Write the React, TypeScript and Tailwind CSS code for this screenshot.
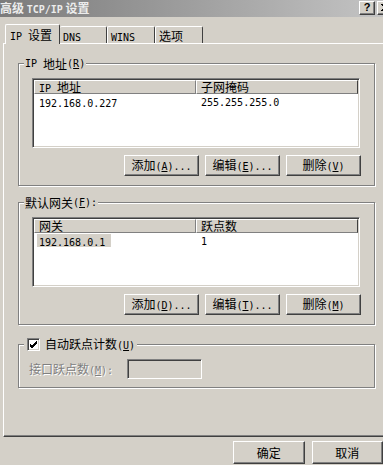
import React from "react";

const MONO = "font-['DejaVu_Sans_Mono',monospace] text-[10px] whitespace-pre";

function renderAscii(p: string) {
  const segs = p.split("&");
  return segs.map((s, i) =>
    i === 0 ? (
      <React.Fragment key={i}>{s}</React.Fragment>
    ) : (
      <React.Fragment key={i}>
        <u className="underline-offset-[1px]">{s[0]}</u>
        {s.slice(1)}
      </React.Fragment>
    )
  );
}

function Txt({ s }: { s: string }) {
  const parts = s.split(/([\x20-\x7E]+)/).filter((x) => x.length > 0);
  return (
    <>
      {parts.map((p, i) =>
        /^[\x20-\x7E]+$/.test(p) ? (
          <span key={i} className={MONO}>
            {renderAscii(p)}
          </span>
        ) : (
          <span key={i}>{p}</span>
        )
      )}
    </>
  );
}

const RAISED =
  "border border-t-white border-l-white border-r-[#404040] border-b-[#404040] shadow-[inset_-1px_-1px_0_#808080] bg-[#d4d0c8]";
const SUNKEN =
  "border border-t-[#808080] border-l-[#808080] border-r-white border-b-white shadow-[inset_1px_1px_0_#404040,inset_-1px_-1px_0_#d4d0c8]";

function Btn({ label, w = "w-[75px]", h = "h-[21px]" }: { label: string; w?: string; h?: string }) {
  return (
    <div className={`flex items-center justify-center ${w} ${h} ${RAISED}`}>
      <span className="leading-[13px]">
        <Txt s={label} />
      </span>
    </div>
  );
}

function List({
  cols,
  rows,
  selFirst,
}: {
  cols: [string, string];
  rows: [string, string][];
  selFirst?: boolean;
}) {
  return (
    <div className={`w-[328px] h-[70px] bg-white p-[1px] ${SUNKEN}`}>
      <div className="flex h-[14px] leading-[12px]">
        <div className="w-[162px] border border-t-white border-l-white border-r-[#808080] border-b-[#808080] bg-[#d4d0c8] pl-[4px]">
          <Txt s={cols[0]} />
        </div>
        <div className="flex-1 border border-t-white border-l-white border-r-[#404040] border-b-[#808080] bg-[#d4d0c8] pl-[4px]">
          <Txt s={cols[1]} />
        </div>
      </div>
      {rows.map((r, i) => (
        <div key={i} className="flex h-[14px] items-center">
          <div className="w-[162px] pl-[3px]">
            <span
              className={`inline-block pl-[2px] h-[13px] leading-[13px] ${
                selFirst && i === 0 ? "bg-[#d4d0c8] w-[74px]" : ""
              }`}
            >
              <Txt s={r[0]} />
            </span>
          </div>
          <div className="flex-1 pl-[5px] leading-[13px]">
            <Txt s={r[1]} />
          </div>
        </div>
      ))}
    </div>
  );
}

function GroupFrame({
  label,
  className,
  children,
}: {
  label: React.ReactNode;
  className: string;
  children: React.ReactNode;
}) {
  return (
    <div
      className={`relative w-[357px] border border-[#808080] shadow-[inset_1px_1px_0_#fff,1px_1px_0_#fff] ${className}`}
    >
      <div className="absolute left-[5px] top-[-7px] h-[13px] leading-[13px] bg-[#d4d0c8] px-[1px] flex items-center">
        {label}
      </div>
      {children}
    </div>
  );
}

function ListGroup({
  label,
  cols,
  rows,
  btns,
  selFirst,
  mt,
}: {
  label: string;
  cols: [string, string];
  rows: [string, string][];
  btns: [string, string, string];
  selFirst?: boolean;
  mt: string;
}) {
  return (
    <GroupFrame label={<Txt s={label} />} className={`${mt} pt-[14px] pl-[13px] pb-[9px]`}>
      <List cols={cols} rows={rows} selFirst={selFirst} />
      <div className="mt-[7px] w-[329px] flex justify-end gap-[6px]">
        {btns.map((b) => (
          <Btn key={b} label={b} />
        ))}
      </div>
    </GroupFrame>
  );
}

export default function App() {
  return (
    <div className="w-[383px] h-[465px] overflow-hidden bg-[#d4d0c8] font-['Noto_Sans_CJK_SC',sans-serif] text-[12px] leading-[13px] text-black select-none">
      {/* title bar */}
      <div className="h-[17px] flex items-center justify-between bg-linear-to-r from-[#7b7b7b] to-[#c4c4c4]">
        <span className="ml-0 font-bold text-[#ececec] leading-[13px]">
          高级 <span className="font-['DejaVu_Sans_Mono',monospace] text-[10px]">TCP/IP</span> 设置
        </span>
        <div className="flex items-center gap-[2px] mr-[-10px] mt-[-2px]">
          <div className={`w-[16px] h-[14px] flex items-center justify-center ${RAISED}`}>
            <span className="font-['Liberation_Sans',sans-serif] font-bold text-[11px] leading-[11px]">?</span>
          </div>
          <div className={`w-[16px] h-[14px] flex items-center justify-center ${RAISED}`}>
            <svg width="8" height="7" viewBox="0 0 8 7">
              <path d="M0 0 L7 7 M1 0 L8 7 M7 0 L0 7 M8 0 L1 7" stroke="#000" strokeWidth="1" />
            </svg>
          </div>
        </div>
      </div>

      {/* tabs */}
      <div className="relative z-10 mt-[7px] h-[20px] flex items-end pl-[5px]">
        <div className="h-[20px] w-[55px] bg-[#d4d0c8] border-t border-l border-r border-t-white border-l-white border-r-[#404040] rounded-t-[2px] pl-[4px] pt-[3px] leading-[13px]">
          <Txt s="IP 设置" />
        </div>
        <div className="mb-[1px] h-[17px] w-[47px] border-t border-r border-t-white border-r-[#404040] rounded-t-[2px] pl-[3px] pt-[2px] leading-[13px]">
          <Txt s="DNS" />
        </div>
        <div className="mb-[1px] h-[17px] w-[48px] border-t border-l border-r border-t-white border-l-white border-r-[#404040] rounded-t-[2px] pl-[3px] pt-[2px] leading-[13px]">
          <Txt s="WINS" />
        </div>
        <div className="mb-[1px] h-[17px] w-[48px] border-t border-l border-r border-t-white border-l-white border-r-[#404040] rounded-t-[2px] pl-[3px] pt-[2px] leading-[13px]">
          <Txt s="选项" />
        </div>
      </div>

      {/* panel */}
      <div className="-mt-px ml-[3px] h-[394px] border-t border-l border-b border-t-white border-l-white border-b-[#404040] shadow-[inset_0_-1px_0_#808080] pl-[14px] pt-[19px]">
        <ListGroup
          mt="mt-0"
          label="IP 地址(&R)"
          cols={["IP 地址", "子网掩码"]}
          rows={[["192.168.0.227", "255.255.255.0"]]}
          btns={["添加(&A)...", "编辑(&E)...", "删除(&V)"]}
        />
        <ListGroup
          mt="mt-[16px]"
          label="默认网关(&F):"
          cols={["网关", "跃点数"]}
          rows={[["192.168.0.1", "1"]]}
          btns={["添加(&D)...", "编辑(&T)...", "删除(&M)"]}
          selFirst
        />
        <GroupFrame
          className="mt-[19px] pt-[14px] pl-[10px] pb-[8px]"
          label={
            <div className="flex items-center gap-[5px] ml-[2px] pr-[1px]">
              <div className={`w-[13px] h-[13px] bg-white flex items-center justify-center ${SUNKEN}`}>
                <svg width="9" height="9" viewBox="0 0 9 9">
                  <path d="M1 4 L3 6 L8 1 M1 5 L3 7 L8 2 M1 6 L3 8 L8 3" stroke="#000" strokeWidth="1" fill="none" />
                </svg>
              </div>
              <span>
                <Txt s="自动跃点计数(&U)" />
              </span>
            </div>
          }
        >
          <div className="flex items-center h-[20px]">
            <div className="w-[98px] text-[#808080] [text-shadow:1px_1px_0_#fff]">
              <Txt s="接口跃点数(&M):" />
            </div>
            <div className={`w-[75px] h-[20px] bg-[#d4d0c8] ${SUNKEN}`} />
          </div>
        </GroupFrame>
      </div>

      {/* bottom buttons */}
      <div className="mt-[4px] pl-[233px] flex gap-[7px]">
        <Btn label="确定" h="h-[23px]" />
        <Btn label="取消" h="h-[23px]" />
      </div>
    </div>
  );
}
